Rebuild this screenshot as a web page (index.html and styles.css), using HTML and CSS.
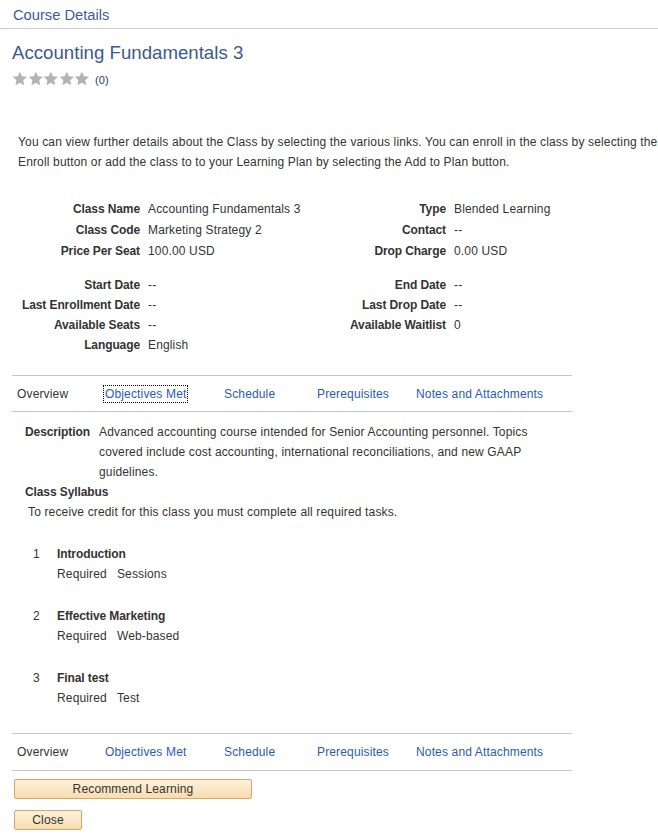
FILE: index.html
```html
<!DOCTYPE html>
<html>
<head>
<meta charset="utf-8">
<title>Course Details</title>
<link rel="stylesheet" href="styles.css">
</head>
<body>
<div class="page-header">Course Details</div>
<h1 class="title">Accounting Fundamentals 3</h1>
<div class="rating">
  <span class="stars">
    <svg viewBox="0 0 16 15" class="star"><path d="M8 0.5l2.2 4.7 5.1 0.6-3.8 3.5 1 5.1L8 11.9l-4.5 2.5 1-5.1L0.7 5.8l5.1-0.6z"/></svg>
    <svg viewBox="0 0 16 15" class="star"><path d="M8 0.5l2.2 4.7 5.1 0.6-3.8 3.5 1 5.1L8 11.9l-4.5 2.5 1-5.1L0.7 5.8l5.1-0.6z"/></svg>
    <svg viewBox="0 0 16 15" class="star"><path d="M8 0.5l2.2 4.7 5.1 0.6-3.8 3.5 1 5.1L8 11.9l-4.5 2.5 1-5.1L0.7 5.8l5.1-0.6z"/></svg>
    <svg viewBox="0 0 16 15" class="star"><path d="M8 0.5l2.2 4.7 5.1 0.6-3.8 3.5 1 5.1L8 11.9l-4.5 2.5 1-5.1L0.7 5.8l5.1-0.6z"/></svg>
    <svg viewBox="0 0 16 15" class="star"><path d="M8 0.5l2.2 4.7 5.1 0.6-3.8 3.5 1 5.1L8 11.9l-4.5 2.5 1-5.1L0.7 5.8l5.1-0.6z"/></svg>
  </span>
  <span class="count">(0)</span>
</div>

<p class="intro">You can view further details about the Class by selecting the various links. You can enroll in the class by selecting the Enroll button or add the class to to your Learning Plan by selecting the Add to Plan button.</p>

<div class="details group1">
  <div class="lbl">Class Name</div><div class="val">Accounting Fundamentals 3</div><div class="lbl">Type</div><div class="val">Blended Learning</div>
  <div class="lbl">Class Code</div><div class="val">Marketing Strategy 2</div><div class="lbl">Contact</div><div class="val">--</div>
  <div class="lbl">Price Per Seat</div><div class="val">100.00 USD</div><div class="lbl">Drop Charge</div><div class="val">0.00 USD</div>
</div>
<div class="details group2">
  <div class="lbl">Start Date</div><div class="val">--</div><div class="lbl">End Date</div><div class="val">--</div>
  <div class="lbl">Last Enrollment Date</div><div class="val">--</div><div class="lbl">Last Drop Date</div><div class="val">--</div>
  <div class="lbl">Available Seats</div><div class="val">--</div><div class="lbl">Available Waitlist</div><div class="val">0</div>
  <div class="lbl">Language</div><div class="val">English</div><div></div><div></div>
</div>

<div class="tabs tabs-top">
  <span class="tab current">Overview</span>
  <span class="tab"><a class="link focused">Objectives Met</a></span>
  <span class="tab"><a class="link">Schedule</a></span>
  <span class="tab"><a class="link">Prerequisites</a></span>
  <span class="tab"><a class="link">Notes and Attachments</a></span>
</div>

<div class="desc">
  <div class="desc-lbl">Description</div>
  <div class="desc-val">Advanced accounting course intended for Senior Accounting personnel. Topics covered include cost accounting, international reconciliations, and new GAAP guidelines.</div>
</div>
<div class="syllabus-head">Class Syllabus</div>
<div class="syllabus-note">To receive credit for this class you must complete all required tasks.</div>

<div class="items">
  <div class="item">
    <div class="num">1</div>
    <div class="item-body">
      <div class="item-title">Introduction</div>
      <div class="item-meta"><span class="req">Required</span><span>Sessions</span></div>
    </div>
  </div>
  <div class="item">
    <div class="num">2</div>
    <div class="item-body">
      <div class="item-title">Effective Marketing</div>
      <div class="item-meta"><span class="req">Required</span><span>Web-based</span></div>
    </div>
  </div>
  <div class="item">
    <div class="num">3</div>
    <div class="item-body">
      <div class="item-title">Final test</div>
      <div class="item-meta"><span class="req">Required</span><span>Test</span></div>
    </div>
  </div>
</div>

<div class="tabs tabs-bottom">
  <span class="tab current">Overview</span>
  <span class="tab"><a class="link">Objectives Met</a></span>
  <span class="tab"><a class="link">Schedule</a></span>
  <span class="tab"><a class="link">Prerequisites</a></span>
  <span class="tab"><a class="link">Notes and Attachments</a></span>
</div>

<div class="buttons">
  <button class="btn btn-wide">Recommend Learning</button>
  <button class="btn btn-close">Close</button>
</div>
</body>
</html>
```

FILE: styles.css
```css
html, body {
  margin: 0;
  padding: 0;
  background: #fff;
}
body {
  font-family: "Liberation Sans", Arial, sans-serif;
  font-size: 12px;
  letter-spacing: 0.15px;
  color: #333;
  width: 658px;
  overflow: hidden;
}
.page-header {
  font-size: 14.7px;
  letter-spacing: 0;
  line-height: 18px;
  color: #3f5aa4;
  padding: 6px 13px 0;
  height: 22px;
  border-bottom: 1px solid #cbcbd3;
}
.title {
  margin: 13px 0 0 12px;
  font-size: 18.67px;
  letter-spacing: 0;
  line-height: 22px;
  font-weight: normal;
  color: #3c5a8a;
}
.rating {
  display: flex;
  align-items: center;
  gap: 5px;
  margin: 6px 0 0 12px;
  height: 16px;
}
.stars {
  display: flex;
}
.star {
  width: 15.6px;
  height: 15px;
  fill: #b3b3b3;
}
.count {
  font-size: 11px;
  color: #2d3b55;
  margin-top: 3px;
}
.intro {
  margin: 46px 0 0 18px;
  width: 640px;
  line-height: 20px;
}
.details {
  display: grid;
  grid-template-columns: 140px 170px 120px auto;
  column-gap: 8px;
}
.group1 {
  margin-top: 27px;
  grid-auto-rows: 21px;
}
.group2 {
  margin-top: 13px;
  grid-auto-rows: 20px;
}
.details .lbl {
  text-align: right;
  font-weight: bold;
  letter-spacing: -0.1px;
  line-height: 20px;
  white-space: nowrap;
}
.details .val {
  line-height: 20px;
  white-space: nowrap;
}
.tabs {
  display: grid;
  grid-template-columns: 88px 119px 93px 99px auto;
  width: 555px;
  margin-left: 12px;
  padding-left: 5px;
  height: 35px;
  align-items: center;
  border-top: 1px solid #c6c6c6;
  border-bottom: 1px solid #c6c6c6;
}
.tabs-top {
  margin-top: 20px;
}
.tabs-bottom {
  margin-top: 25px;
  height: 36px;
}
.tab {
  white-space: nowrap;
  line-height: 16px;
}
.tab.current {
  color: #333;
}
.link {
  color: #2b5ab4;
  text-decoration: none;
}
.link.focused {
  outline: 1px dotted #000;
  outline-offset: 1px;
}
.desc {
  display: flex;
  margin: 10px 0 0 25px;
  line-height: 20px;
}
.desc-lbl {
  font-weight: bold;
  letter-spacing: -0.1px;
  width: 66px;
  margin-right: 8px;
  white-space: nowrap;
}
.desc-val {
  width: 445px;
}
.syllabus-head {
  margin-left: 25px;
  font-weight: bold;
  letter-spacing: -0.1px;
  line-height: 20px;
}
.syllabus-note {
  margin-left: 28px;
  line-height: 20px;
}
.items {
  display: flex;
  flex-direction: column;
  gap: 22px;
  margin: 22px 0 0 33px;
}
.item {
  display: flex;
  line-height: 20px;
}
.num {
  width: 24px;
}
.item-title {
  font-weight: bold;
  letter-spacing: -0.1px;
}
.item-meta {
  display: flex;
  gap: 10px;
}
.buttons {
  display: flex;
  flex-direction: column;
  align-items: flex-start;
  gap: 11px;
  margin: 8px 0 0 14px;
}
.btn {
  font-family: "Liberation Sans", Arial, sans-serif;
  font-size: 12px;
  letter-spacing: 0.15px;
  color: #333;
  height: 20px;
  padding: 0;
  line-height: 18px;
  border: 1px solid #d9a66c;
  border-radius: 2px;
  background: linear-gradient(#fdf1dc, #f8ddae);
}
.btn-wide {
  width: 238px;
}
.btn-close {
  width: 68px;
}
```
